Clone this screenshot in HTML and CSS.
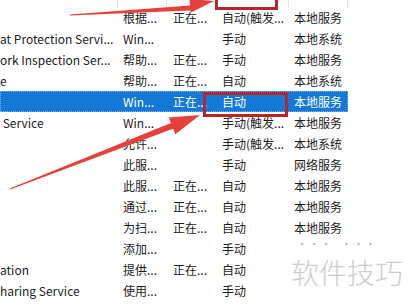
FILE: index.html
```html
<!DOCTYPE html>
<html lang="zh">
<head>
<meta charset="utf-8">
<link rel="stylesheet" href="styles.css">
</head>
<body>
<div class="page">
  <div class="list">
    <div class="row head">
      <div class="c name"></div><div class="c desc"></div><div class="c status"></div><div class="c start"></div><div class="c logon"></div>
    </div>
    <div class="row"><div class="c name"></div><div class="c desc">根据...</div><div class="c status">正在...</div><div class="c start">自动(触发...</div><div class="c logon">本地服务</div></div>
    <div class="row"><div class="c name">at Protection Servi...</div><div class="c desc">Win...</div><div class="c status"></div><div class="c start">手动</div><div class="c logon">本地系统</div></div>
    <div class="row"><div class="c name">ork Inspection Ser...</div><div class="c desc">帮助...</div><div class="c status">正在...</div><div class="c start">手动</div><div class="c logon">本地服务</div></div>
    <div class="row"><div class="c name">e</div><div class="c desc">帮助...</div><div class="c status">正在...</div><div class="c start">自动</div><div class="c logon">本地系统</div></div>
    <div class="row sel"><div class="c name"></div><div class="c desc">Win...</div><div class="c status">正在...</div><div class="c start">自动</div><div class="c logon">本地服务</div></div>
    <div class="row"><div class="c name">&nbsp;Service</div><div class="c desc">Win...</div><div class="c status"></div><div class="c start">手动(触发...</div><div class="c logon">本地服务</div></div>
    <div class="row"><div class="c name"></div><div class="c desc">允许...</div><div class="c status"></div><div class="c start">手动(触发...</div><div class="c logon">本地系统</div></div>
    <div class="row"><div class="c name"></div><div class="c desc">此服...</div><div class="c status"></div><div class="c start">手动</div><div class="c logon">网络服务</div></div>
    <div class="row"><div class="c name"></div><div class="c desc">此服...</div><div class="c status">正在...</div><div class="c start">自动</div><div class="c logon">本地服务</div></div>
    <div class="row"><div class="c name"></div><div class="c desc">通过...</div><div class="c status">正在...</div><div class="c start">自动</div><div class="c logon">本地服务</div></div>
    <div class="row"><div class="c name"></div><div class="c desc">为扫...</div><div class="c status">正在...</div><div class="c start">自动</div><div class="c logon">本地服务</div></div>
    <div class="row"><div class="c name"></div><div class="c desc">添加...</div><div class="c status"></div><div class="c start">手动</div><div class="c logon faded">···&nbsp;&nbsp;···</div></div>
    <div class="row"><div class="c name">ation</div><div class="c desc">提供...</div><div class="c status">正在...</div><div class="c start">自动</div><div class="c logon"></div></div>
    <div class="row"><div class="c name">haring Service</div><div class="c desc">使用...</div><div class="c status"></div><div class="c start">手动</div><div class="c logon"></div></div>
  </div>

  <div class="mark box1"></div>
  <div class="mark box2"></div>

  <svg class="arrows" width="410" height="305" viewBox="0 0 410 305">
    <polygon fill="#e5413a" points="70,14.5 190,5.6 189.5,-1 214,1 191,12.5 190.4,10.6 70,15.5"/>
    <polygon fill="#e5413a" points="9.8,188.5 170.9,123.1 168.7,117.5 200,115 175.3,134.3 173.1,128.7 10.2,189.5"/>
  </svg>

  <div class="watermark">软件技巧</div>
</div>
</body>
</html>
```
FILE: styles.css
```css
* { box-sizing: border-box; }
html, body { margin: 0; padding: 0; background: #ffffff; }
body {
  font-family: "Noto Sans CJK SC", "Noto Sans", sans-serif;
  font-size: 12px;
  color: #1c1c1c;
}
.page {
  position: relative;
  width: 410px;
  height: 305px;
  overflow: hidden;
}
.list {
  display: flex;
  flex-direction: column;
}
.row {
  display: flex;
  height: 21px;
  line-height: 21px;
  white-space: nowrap;
}
.row.head {
  height: 7px;
}
.row.head .c {
  border-right: 1px solid #e3e3e3;
}
.c {
  overflow: hidden;
  padding-left: 5px;
  flex: none;
}
.name { width: 118px; padding-left: 0; }
.desc { width: 49px; }
.status { width: 50px; padding-left: 6px; }
.start { width: 72px; }
.logon { width: 59px; }
.row.sel .c {
  background: #1479d6;
  color: #ffffff;
}
.row.sel {
  outline: 1px dotted #7fb4e8;
  outline-offset: -1px;
  width: 348px;
}
.faded {
  color: #b0b0b0;
  line-height: 11px;
  font-size: 10px;
  letter-spacing: 2px;
  padding-left: 8px;
  overflow: visible;
}

.mark {
  position: absolute;
  border: 3px solid #b9232c;
}
.box1 { left: 215px; top: -14px; width: 63px; height: 24px; }
.box2 { left: 203px; top: 92px; width: 85px; height: 25px; }

.arrows {
  position: absolute;
  left: 0;
  top: 0;
}
.watermark {
  position: absolute;
  left: 291px;
  top: 257px;
  font-size: 28px;
  line-height: 30px;
  color: #cdcdcd;
  font-family: "Noto Sans CJK SC", sans-serif;
  font-weight: 300;
}
```
